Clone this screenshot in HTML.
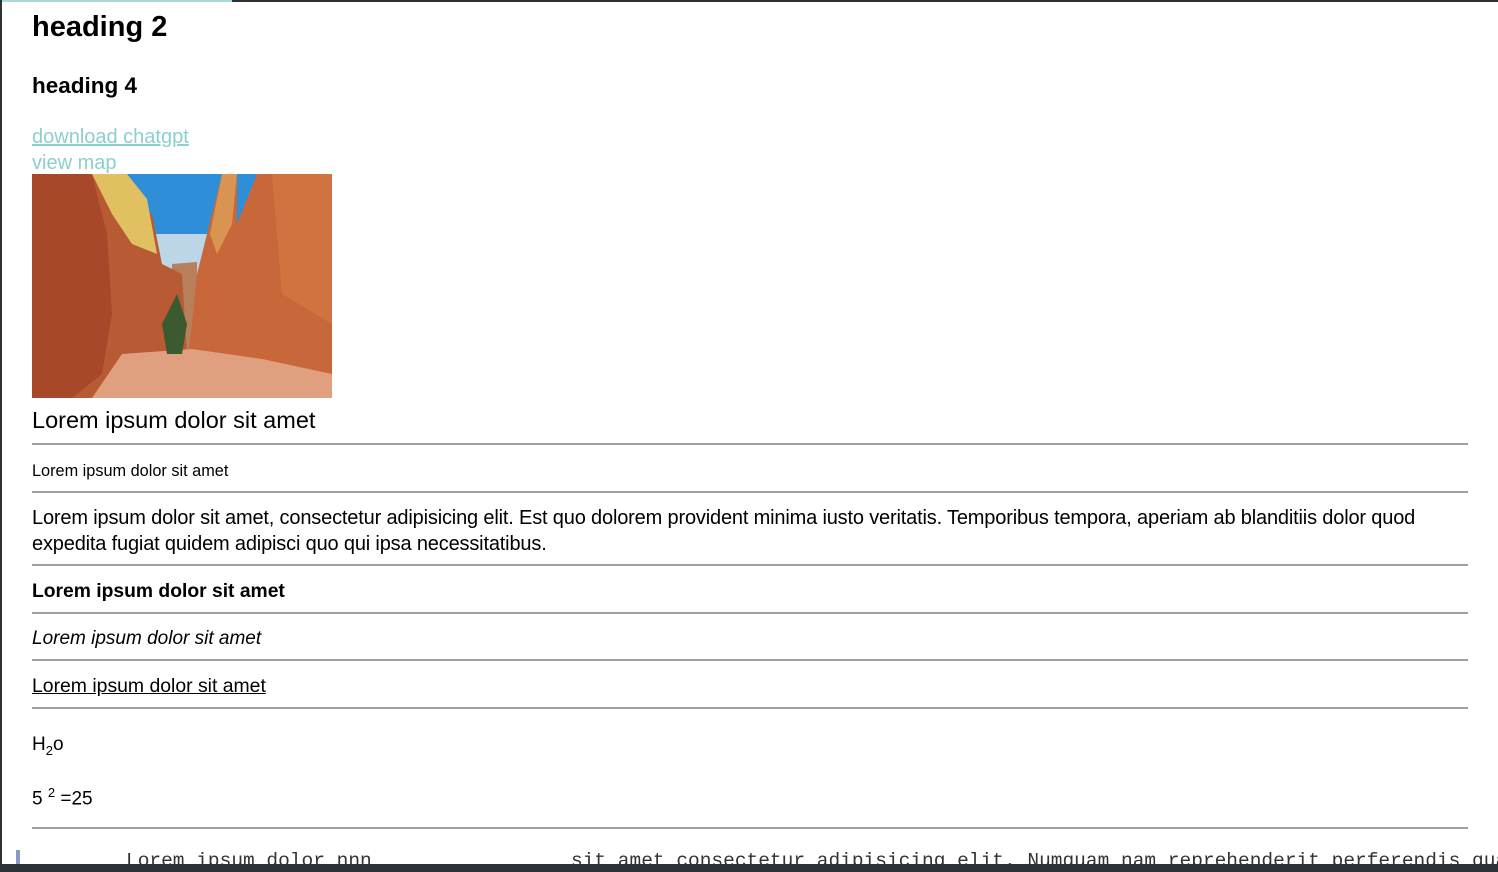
<!DOCTYPE html>
<html><head><meta charset="utf-8"><style>
*{margin:0;padding:0}
body{width:1498px;height:872px;position:relative;overflow:hidden;background:#fff;font-family:"Liberation Sans",sans-serif;color:#000}
.a{position:absolute;white-space:nowrap;line-height:1}
.hr{position:absolute;left:32px;width:1436px;height:2px;background:#a0a0a0}
a{color:#8ccfcf;text-decoration:underline}
</style></head><body>
<div style="position:absolute;left:0;top:0;width:2px;height:872px;background:#2b3338"></div>
<div style="position:absolute;left:232px;top:0;width:1266px;height:2px;background:#2b3338"></div>
<div style="position:absolute;left:2px;top:0;width:230px;height:2px;background:#a8d8d8"></div>
<div class="a" style="left:32px;top:13px;font-size:29px;font-weight:bold">heading 2</div>
<div class="a" style="left:32px;top:75px;font-size:22.5px;font-weight:bold">heading 4</div>
<div class="a" style="left:32px;top:127px;font-size:20px"><a>download chatgpt</a></div>
<div class="a" style="left:32px;top:153px;font-size:20px;color:#8ccfcf">view map</div>
<svg style="position:absolute;left:32px;top:174px" width="300" height="224" viewBox="0 0 300 224">
<rect width="300" height="224" fill="#2e8fd8"/>
<rect y="60" width="300" height="40" fill="#bcd6e8"/>
<polygon points="140,90 165,88 165,230 140,230" fill="#b8805a"/>
<polygon points="0,0 65,0 120,40 130,90 150,100 155,180 100,224 0,224" fill="#b85a34"/>
<polygon points="60,0 95,0 115,25 125,80 100,70 80,40" fill="#e0c060"/>
<polygon points="0,0 60,0 75,60 80,140 70,200 40,224 0,224" fill="#a8482a"/>
<polygon points="190,0 205,0 205,50 225,0 300,0 300,224 150,224 160,150 165,100 180,40" fill="#c8683a"/>
<polygon points="190,0 205,0 200,50 185,80 178,60" fill="#d89450"/>
<polygon points="240,0 300,0 300,150 250,120" fill="#d07340"/>
<polygon points="60,224 90,180 160,175 230,185 300,200 300,224" fill="#e0a080"/>
<polygon points="130,150 145,120 155,150 150,180 135,180" fill="#3b5a30"/>
</svg>
<div class="a" style="left:32px;top:409px;font-size:23.5px">Lorem ipsum dolor sit amet</div>
<div class="hr" style="top:443px"></div>
<div class="a" style="left:32px;top:463px;font-size:16.3px">Lorem ipsum dolor sit amet</div>
<div class="hr" style="top:491px"></div>
<div class="a" style="left:32px;top:508px;font-size:20px;letter-spacing:-0.17px">Lorem ipsum dolor sit amet, consectetur adipisicing elit. Est quo dolorem provident minima iusto veritatis. Temporibus tempora, aperiam ab blanditiis dolor quod</div>
<div class="a" style="left:32px;top:534px;font-size:20px;letter-spacing:-0.17px">expedita fugiat quidem adipisci quo qui ipsa necessitatibus.</div>
<div class="hr" style="top:564px"></div>
<div class="a" style="left:32px;top:582px;font-size:19.3px;font-weight:bold">Lorem ipsum dolor sit amet</div>
<div class="hr" style="top:612px"></div>
<div class="a" style="left:32px;top:629px;font-size:19px;font-style:italic">Lorem ipsum dolor sit amet</div>
<div class="hr" style="top:659px"></div>
<div class="a" style="left:32px;top:677px;font-size:19.4px;text-decoration:underline">Lorem ipsum dolor sit amet</div>
<div class="hr" style="top:707px"></div>
<div class="a" style="left:32px;top:735px;font-size:19px">H<sub style="font-size:13px">2</sub>o</div>
<div class="a" style="left:32px;top:786px;font-size:19px">5 <sup style="font-size:13px">2</sup> =25</div>
<div class="hr" style="top:827px"></div>
<div style="position:absolute;left:16px;top:850px;width:4px;height:14px;background:#8a9ac8"></div>
<div class="a" style="left:126px;top:852px;font-family:'Liberation Mono',monospace;font-size:19.5px;color:#333">Lorem ipsum dolor nnn</div>
<div class="a" style="left:571px;top:852px;font-family:'Liberation Mono',monospace;font-size:19.5px;color:#333">sit amet consectetur adipisicing elit. Numquam nam reprehenderit perferendis qua</div>
<div style="position:absolute;left:0;top:864px;width:1498px;height:8px;background:#2b3338"></div>
</body></html>
